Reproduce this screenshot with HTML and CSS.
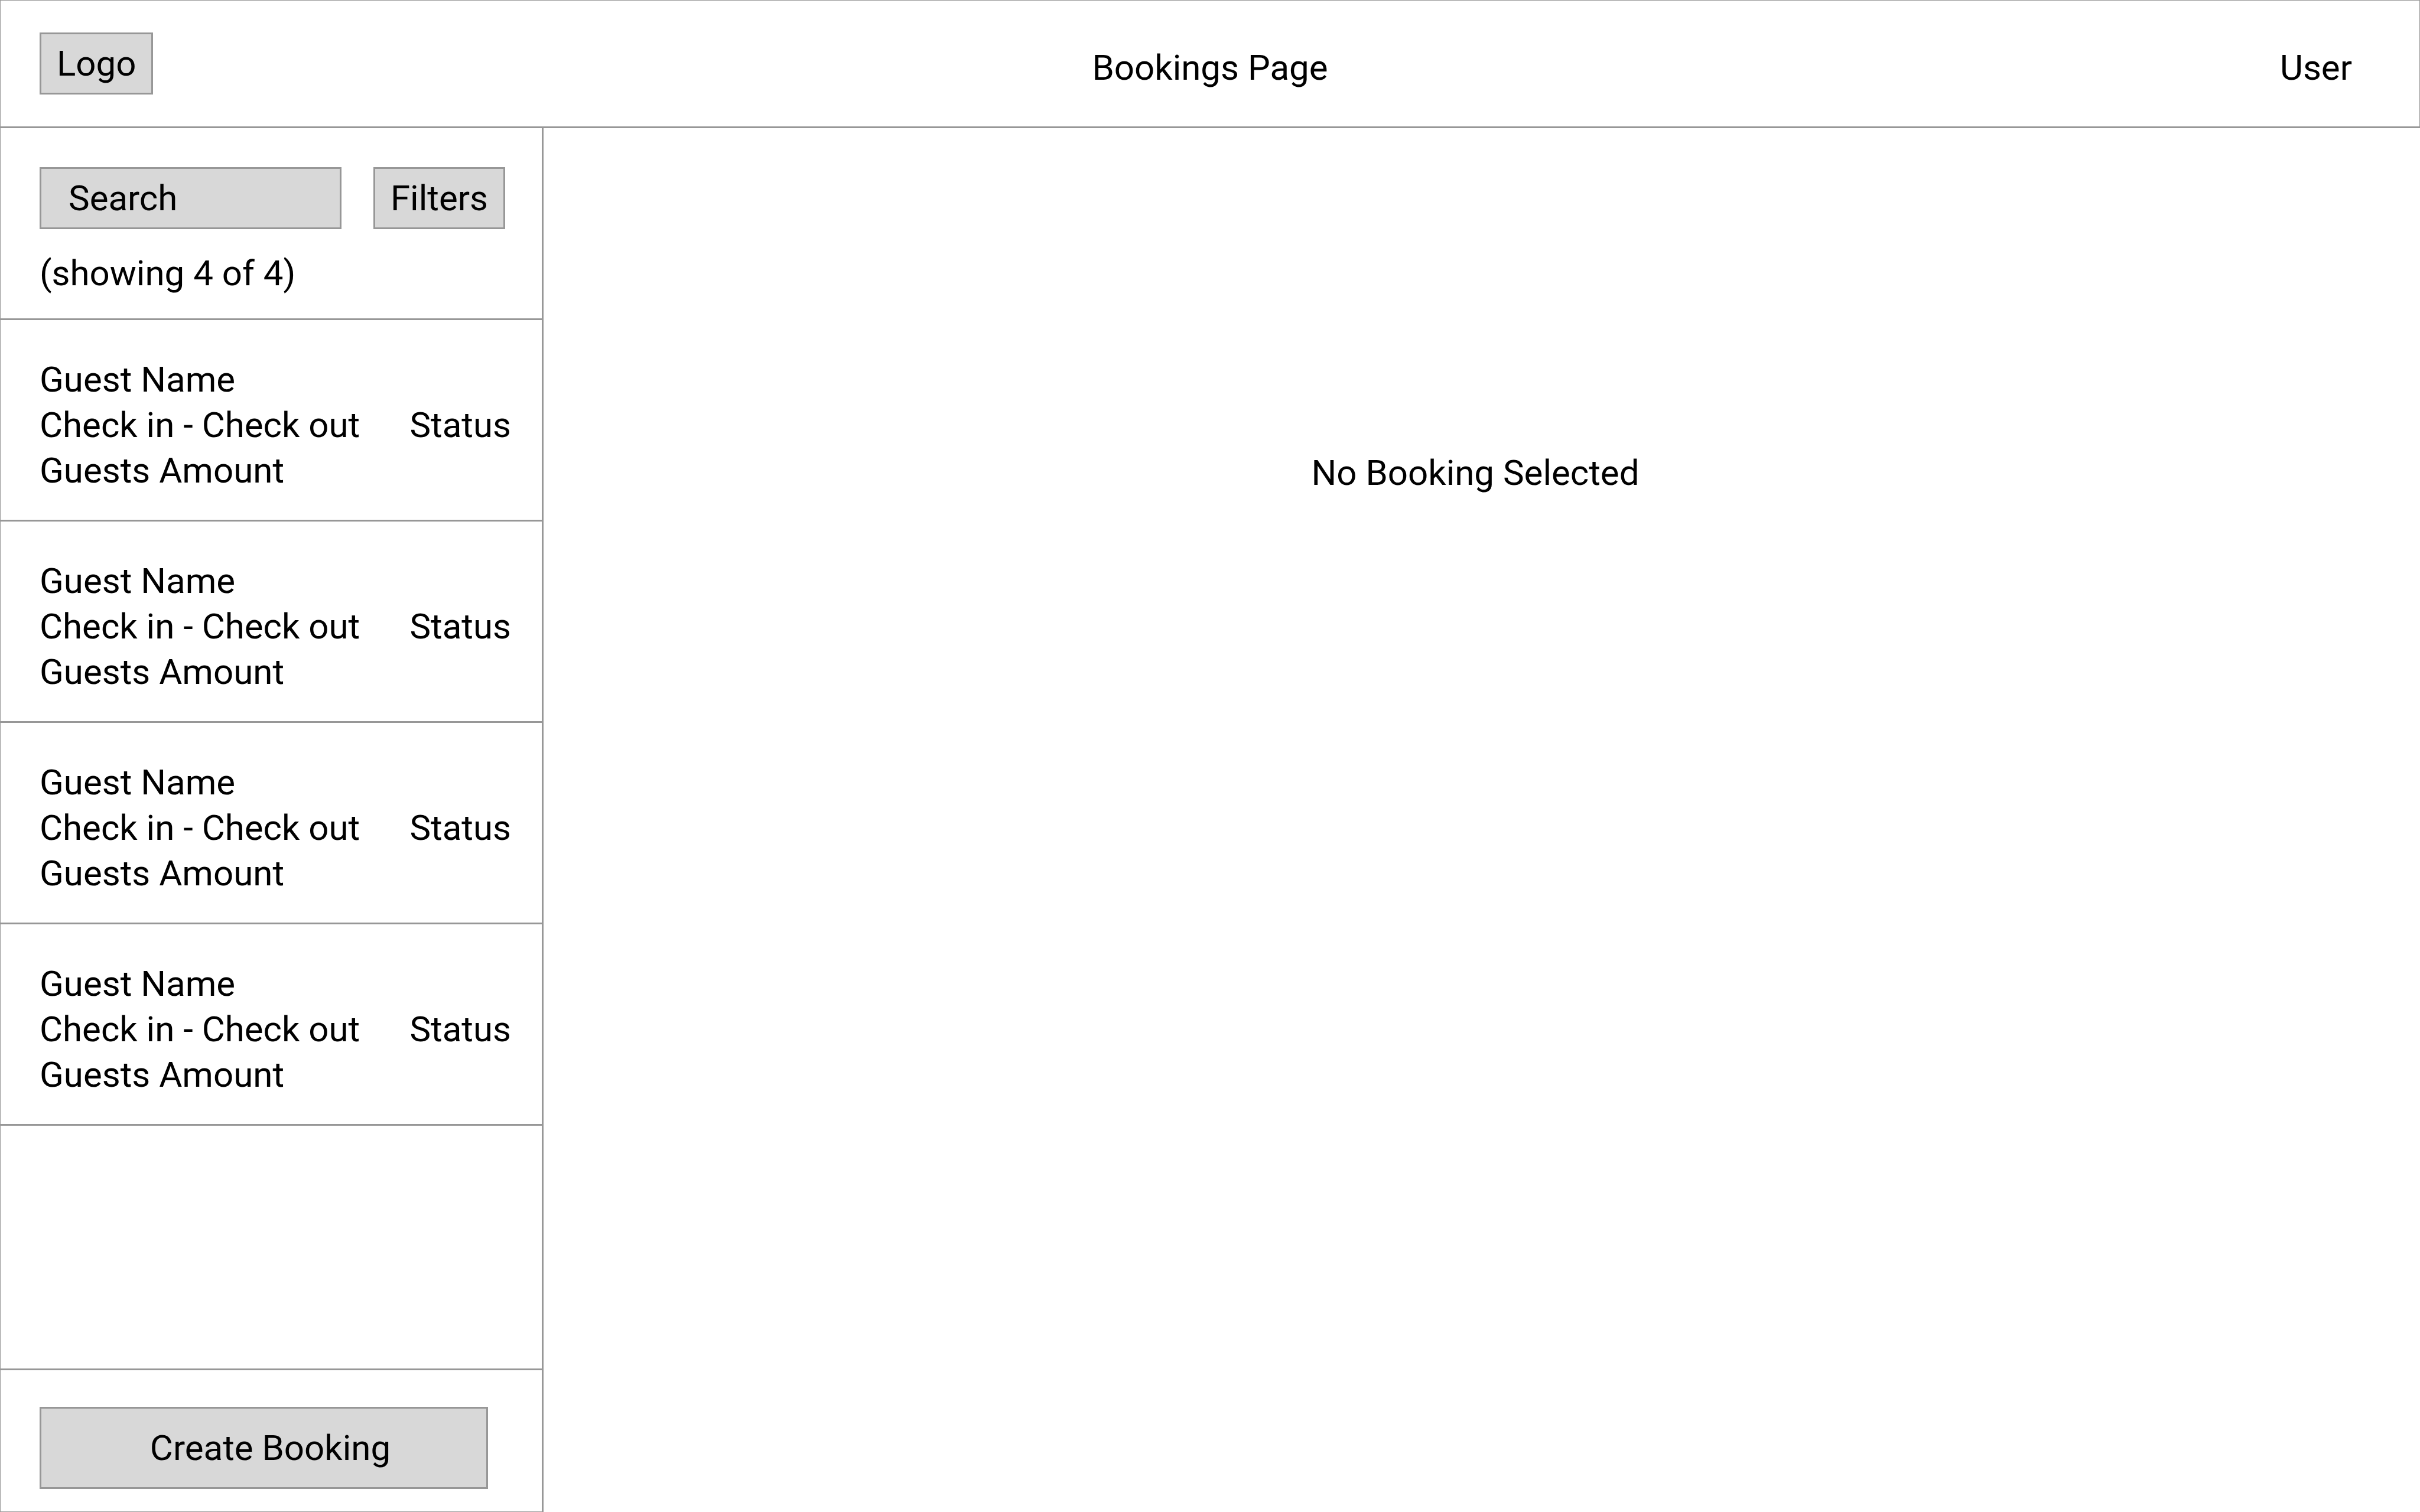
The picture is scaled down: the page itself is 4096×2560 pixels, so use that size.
FILE: index.html
```
<!DOCTYPE html>
<html lang="en">
<head>
<meta charset="utf-8">
<meta name="viewport" content="width=device-width, initial-scale=1">
<title>Bookings Page</title>
<link rel="stylesheet" href="styles.css">
</head>
<body>
<div class="page">
  <header class="header">
    <a class="box logo" href="#">Logo</a>
    <h1 class="title">Bookings Page</h1>
    <a class="user" href="#">User</a>
  </header>
  <div class="body">
    <aside class="sidebar">
      <div class="tools">
        <form class="search-row">
          <input class="box search" type="search" placeholder="Search" aria-label="Search">
          <button class="box filters" type="button">Filters</button>
        </form>
        <p class="count">(showing 4 of 4)</p>
      </div>
      <ul class="bookings">
        <li class="booking">
          <div class="details"><p>Guest Name</p><p>Check in - Check out</p><p>Guests Amount</p></div>
          <span class="status">Status</span>
        </li>
        <li class="booking">
          <div class="details"><p>Guest Name</p><p>Check in - Check out</p><p>Guests Amount</p></div>
          <span class="status">Status</span>
        </li>
        <li class="booking">
          <div class="details"><p>Guest Name</p><p>Check in - Check out</p><p>Guests Amount</p></div>
          <span class="status">Status</span>
        </li>
        <li class="booking">
          <div class="details"><p>Guest Name</p><p>Check in - Check out</p><p>Guests Amount</p></div>
          <span class="status">Status</span>
        </li>
      </ul>
      <div class="actions">
        <button class="box create" type="button">Create Booking</button>
      </div>
    </aside>
    <main class="main">
      <p class="empty">No Booking Selected</p>
    </main>
  </div>
</div>
</body>
</html>
```
FILE: styles.css
```
*,
*::before,
*::after {
  box-sizing: border-box;
}

:root {
  --line: #979797;
  --fill: #d8d8d8;
}

body {
  margin: 0;
  background: #fff;
  color: #000;
  font: 400 60px/77px Roboto, "Liberation Sans", sans-serif;
}

h1,
p,
ul {
  margin: 0;
  padding: 0;
  font: inherit;
}

a {
  color: inherit;
  text-decoration: none;
}

.page {
  display: flex;
  flex-direction: column;
  min-height: 100vh;
}

/* Grey outlined controls */
.box {
  margin: 0;
  padding: 11px 26px;
  border: 3px solid var(--line);
  border-radius: 0;
  background: var(--fill);
  color: inherit;
  font: inherit;
  text-align: center;
}

/* Header */
.header {
  display: grid;
  grid-template-columns: 1fr auto 1fr;
  align-items: start;
  padding: 54px 114px 54px 66px;
  border: 1px solid var(--line);
  border-bottom-width: 3px;
}

.logo {
  justify-self: start;
}

.title,
.user {
  padding-top: 21px;
}

.title {
  padding-left: 48px;
}

.user {
  justify-self: end;
}

/* Columns */
.body {
  display: flex;
  flex: 1;
}

.sidebar {
  display: flex;
  flex: none;
  flex-direction: column;
  width: 920px;
  border: 1px solid var(--line);
  border-top: 0;
  border-right-width: 3px;
}

.tools {
  padding: 66px 62px 38px 66px;
  border-bottom: 3px solid var(--line);
}

.search-row {
  display: flex;
  gap: 54px;
  margin-bottom: 36px;
}

.search {
  flex: 1;
  min-width: 0;
  height: 105px;
  padding: 0 46px;
  text-align: left;
  appearance: none;
}

.search::placeholder {
  color: inherit;
  opacity: 1;
}

/* Booking list */
.bookings {
  list-style: none;
}

.booking {
  display: flex;
  align-items: center;
  justify-content: space-between;
  padding: 62px 52px 45px 66px;
  border-bottom: 3px solid var(--line);
}

.actions {
  margin-top: auto;
  padding: 62px 91px 38px 66px;
  border-top: 3px solid var(--line);
}

.create {
  display: block;
  width: 100%;
  padding: 28px 30px 28px 52px;
}

.main {
  flex: 1;
  padding: 545px 22px 0 0;
  text-align: center;
}
```
